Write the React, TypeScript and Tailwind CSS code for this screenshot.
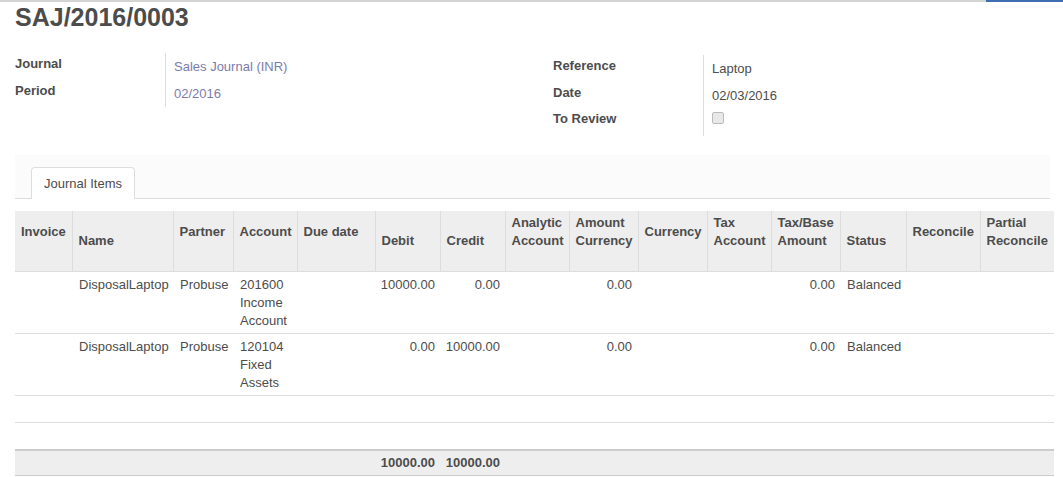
const font = { fontFamily: '"Liberation Sans", Arial, sans-serif' };

const columns = [
	{ label: ["Invoice"], width: 57 },
	{ label: ["Name"], width: 101, low: true },
	{ label: ["Partner"], width: 60 },
	{ label: ["Account"], width: 64 },
	{ label: ["Due date"], width: 78 },
	{ label: ["Debit"], width: 65, low: true },
	{ label: ["Credit"], width: 65, low: true },
	{ label: ["Analytic", "Account"], width: 64 },
	{ label: ["Amount", "Currency"], width: 69 },
	{ label: ["Currency"], width: 69 },
	{ label: ["Tax", "Account"], width: 64 },
	{ label: ["Tax/Base", "Amount"], width: 69 },
	{ label: ["Status"], width: 66, low: true },
	{ label: ["Reconcile"], width: 74 },
	{ label: ["Partial", "Reconcile"], width: 74 },
];

const lines = [
	{
		name: "DisposalLaptop",
		partner: "Probuse",
		account: ["201600", "Income", "Account"],
		debit: "10000.00",
		credit: "0.00",
	},
	{
		name: "DisposalLaptop",
		partner: "Probuse",
		account: ["120104", "Fixed", "Assets"],
		debit: "0.00",
		credit: "10000.00",
	},
];

function Field({ label, children }: { label: string; children: React.ReactNode }) {
	return (
		<div className="flex h-[27px] items-start">
			<div className="w-[150px] shrink-0 pt-[2px] font-bold">{label}</div>
			<div className="border-l border-[#ddd] h-full pl-[8px] pt-[5px]">{children}</div>
		</div>
	);
}

export default function App() {
	return (
		<div className="min-h-[477px] bg-white text-[13px] leading-[18px] text-[#4c4c4c]" style={font}>
			{/* top bar */}
			<div className="flex h-[2px]">
				<div className="flex-1 bg-[#d4d4d4]" />
				<div className="w-[77px] bg-[#3e6db3]" />
			</div>

			<div className="pl-[15px] pr-[9px]">
				<h1 className="text-[25px] font-bold leading-[30px] text-[#4c4c4c]">SAJ/2016/0003</h1>

				{/* header fields */}
				<div className="mt-[21px] flex">
					<div className="w-[538px]">
						<Field label="Journal">
							<span className="text-[#7c7bad]">Sales Journal (INR)</span>
						</Field>
						<Field label="Period">
							<span className="text-[#7c7bad]">02/2016</span>
						</Field>
					</div>
					<div className="pt-[2px]">
						<Field label="Reference">Laptop</Field>
						<Field label="Date">02/03/2016</Field>
						<div className="flex h-[27px] items-start">
							<div className="w-[150px] shrink-0 pt-[1px] font-bold">To Review</div>
							<div className="h-full border-l border-[#ddd] pl-[8px] pt-[3px]">
								<div className="h-[12px] w-[12px] rounded-[2px] border border-[#bbb] bg-[#e8e8e8]" />
							</div>
						</div>
					</div>
				</div>

				{/* notebook */}
				<div className="mt-[19px] mr-[4px] flex h-[44px] items-end border-b border-[#ddd] bg-[#fbfbfb] pl-[16px]">
					<div className="-mb-[1px] flex h-[32px] items-center rounded-t-[4px] border border-b-0 border-[#ddd] bg-white px-[12px]">
						Journal Items
					</div>
				</div>

				{/* journal items */}
				<table className="mt-[12px] w-[1039px] table-fixed border-collapse">
					<colgroup>
						{columns.map((c) => (
							<col key={c.label.join(" ")} style={{ width: c.width }} />
						))}
					</colgroup>
					<thead>
						<tr className="border-b border-[#ddd] bg-[#eee]">
							{columns.map((c, i) => (
								<th
									key={c.label.join(" ")}
									className={`px-[6px] text-left align-middle font-bold text-[#4c4c4c] ${i > 0 ? "border-l border-[#ddd]" : ""} ${c.low ? "py-0" : "pt-[3px] pb-[21px]"}`}
								>
									{c.label.map((l) => (
										<div key={l}>{l}</div>
									))}
								</th>
							))}
						</tr>
					</thead>
					<tbody>
						{lines.map((l, idx) => (
							<tr key={idx} className="border-b border-[#ddd] align-top">
								<td className="pt-[4px] pb-[3px] pl-[7px]" />
								<td className="pt-[4px] pb-[3px] pl-[7px]">{l.name}</td>
								<td className="pt-[4px] pb-[3px] pl-[7px]">{l.partner}</td>
								<td className="pt-[4px] pb-[3px] pl-[7px]">
									{l.account.map((a) => (
										<div key={a}>{a}</div>
									))}
								</td>
								<td />
								<td className="pt-[4px] pb-[3px] pr-[5px] text-right">{l.debit}</td>
								<td className="pt-[4px] pb-[3px] pr-[5px] text-right">{l.credit}</td>
								<td />
								<td className="pt-[4px] pb-[3px] pr-[6px] text-right">0.00</td>
								<td />
								<td />
								<td className="pt-[4px] pb-[3px] pr-[5px] text-right">0.00</td>
								<td className="pt-[4px] pb-[3px] pl-[7px]">Balanced</td>
								<td />
								<td />
							</tr>
						))}
						{[0, 1].map((r) => (
							<tr key={`empty-${r}`} className="border-b border-[#ddd]">
								<td colSpan={15} className="py-[4px]">
									&nbsp;
								</td>
							</tr>
						))}
					</tbody>
					<tfoot>
						<tr className="border-t-2 border-b border-[#ccc] bg-[#eee] font-bold">
							<td colSpan={5} className="py-[3px]">
								&nbsp;
							</td>
							<td className="py-[3px] pr-[5px] text-right">10000.00</td>
							<td className="py-[3px] pr-[5px] text-right">10000.00</td>
							<td colSpan={8} />
						</tr>
					</tfoot>
				</table>
			</div>
		</div>
	);
}
